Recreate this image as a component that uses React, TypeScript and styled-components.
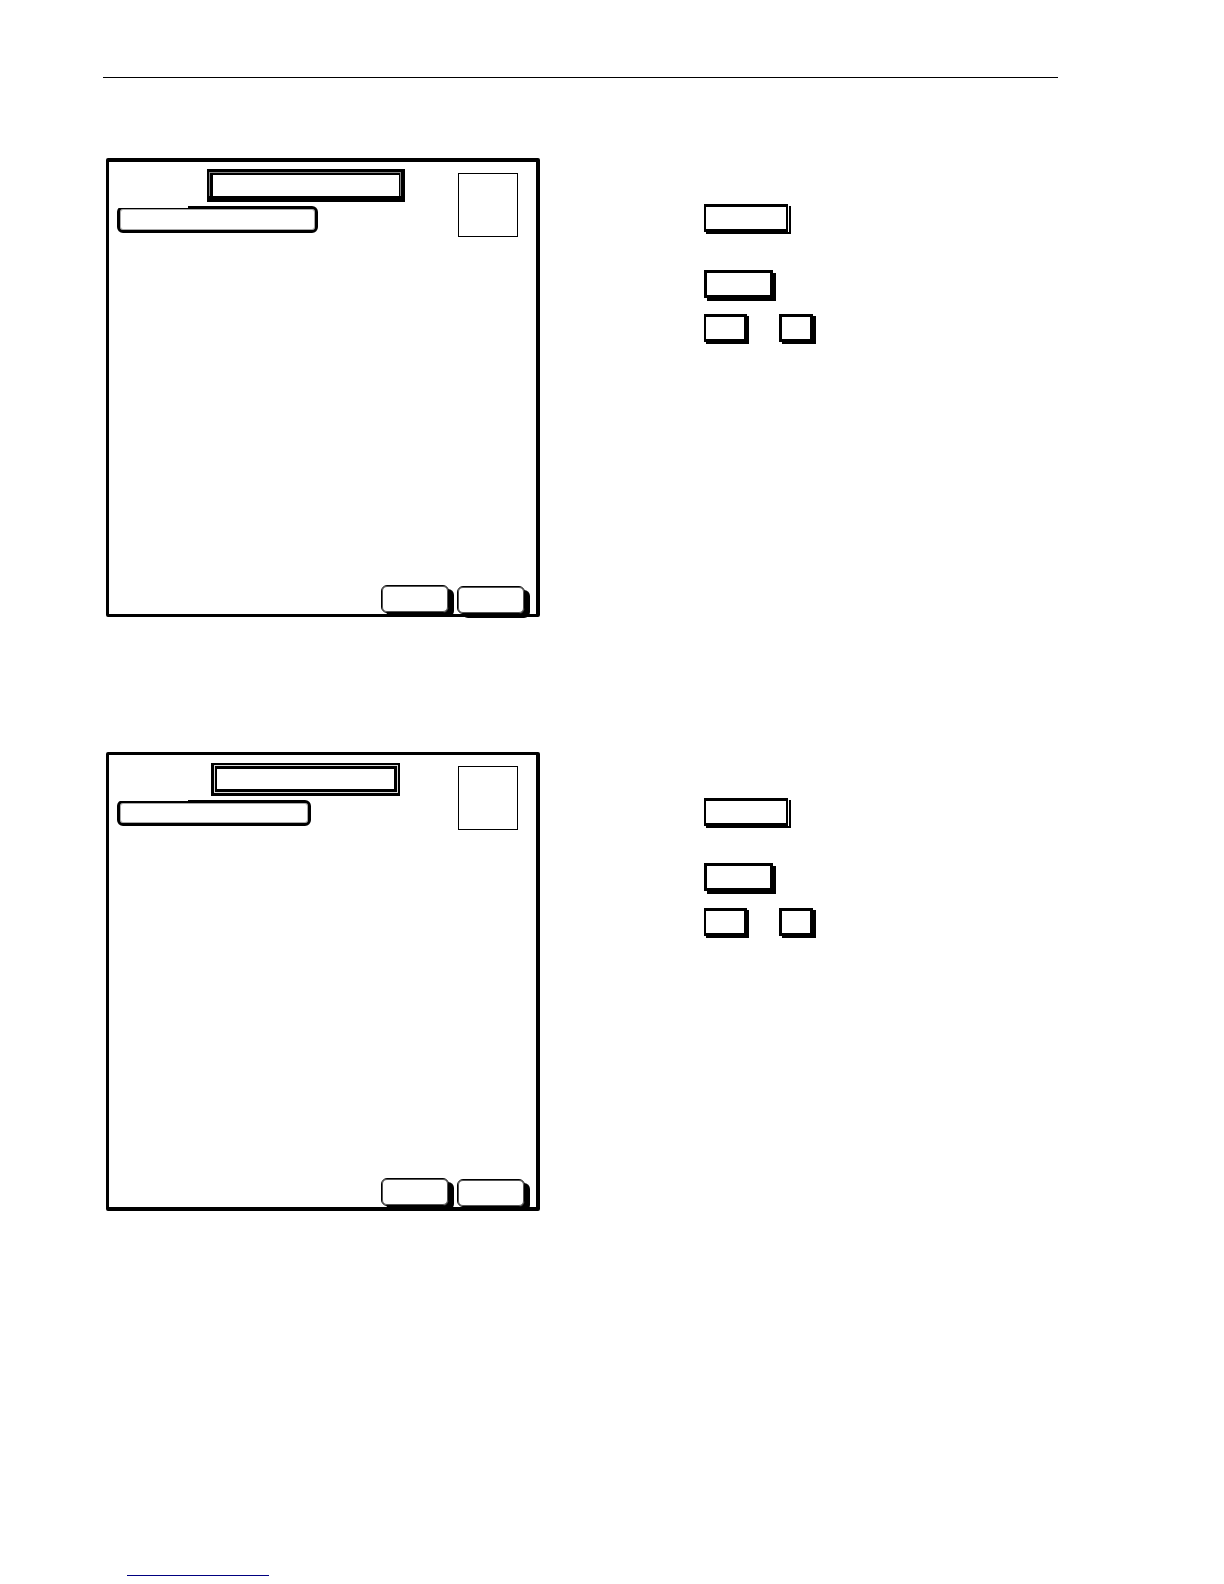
import React from "react";
import styled, { createGlobalStyle } from "styled-components";

const GlobalStyle = createGlobalStyle`
  *, *::before, *::after { box-sizing: border-box; }
  body {
    margin: 0;
    background: #fff;
    color: #000;
    font-family: "Liberation Sans", Arial, sans-serif;
  }
`;

const Page = styled.div`
  display: flex;
  flex-direction: column;
  min-height: 100vh;
  padding: 77px 166px 8px 103px;
`;

const HeaderRule = styled.hr`
  width: 100%;
  height: 1px;
  margin: 0 0 80px;
  border: 0;
  background: #000;
`;

const Sections = styled.main`
  display: flex;
  flex-direction: column;
  gap: 135px;
  padding-left: 3px;
`;

const Section = styled.section`
  display: grid;
  grid-template-columns: minmax(0, 434px) minmax(0, 1fr);
  column-gap: 164px;
`;

const Panel = styled.div<{ $top: number; $bottom: number }>`
  display: flex;
  flex-direction: column;
  justify-content: space-between;
  min-height: 459px;
  padding: ${(p) => 11 - p.$top}px 11px 0 8px;
  border: solid #000;
  border-width: ${(p) => p.$top}px 4px ${(p) => p.$bottom}px 3px;
  border-radius: 2px;
`;

const PanelHead = styled.div`
  display: flex;
  justify-content: space-between;
  padding-right: 7px;
`;

const Headings = styled.div`
  display: flex;
  flex-direction: column;
  align-items: flex-start;
  gap: 4px;
`;

const Title = styled.div<{ $indent: number; $width: number; $border: string; $line: string }>`
  display: flex;
  width: ${(p) => p.$width}px;
  height: 33px;
  margin-left: ${(p) => p.$indent}px;
  border: solid #000;
  border-width: ${(p) => p.$border};
  background: ${(p) => p.$line};
`;

const TitleText = styled.div<{ $border: string; $gap: string }>`
  flex: 1;
  margin: ${(p) => p.$gap};
  border: solid #000;
  border-width: ${(p) => p.$border};
  background: #fff;
`;

const Bar = styled.div<{ $width: number; $height: number; $notch: number }>`
  position: relative;
  width: ${(p) => p.$width}px;
  height: ${(p) => p.$height}px;
  border: 3px solid #000;
  border-radius: 6px;
  box-shadow: inset 0 0 0 1px #aaa;

  &::before {
    content: "";
    position: absolute;
    top: -3px;
    left: -3px;
    width: 71px;
    height: ${(p) => p.$notch}px;
    background: #fff;
  }
`;

const Thumbnail = styled.div<{ $top: number }>`
  flex: none;
  width: 60px;
  height: 64px;
  margin-top: ${(p) => p.$top}px;
  border: 1px solid #000;
`;

const Actions = styled.div`
  display: flex;
  align-items: flex-end;
  justify-content: flex-end;
  gap: 8px;
`;

const ActionButton = styled.button<{ $raised?: boolean }>`
  width: 68px;
  height: 28px;
  margin: 0 0 ${(p) => (p.$raised ? 1 : 0)}px;
  padding: 0;
  border: 1px solid #000;
  border-radius: 6px;
  background: #fff;
  box-shadow: inset 0 0 0 1px #555, 5px 4px 0 #000;
`;

const Keys = styled.div`
  display: flex;
  flex-direction: column;
  align-items: flex-start;
  padding-top: 46px;
`;

const KeyRow = styled.div<{ $after: number }>`
  display: flex;
  gap: 32px;
  margin-bottom: ${(p) => p.$after}px;
`;

const KeyButton = styled.button<{ $width: number; $border?: string; $shadow?: string }>`
  width: ${(p) => p.$width}px;
  height: 28px;
  margin: 0;
  padding: 0;
  border: solid #000;
  border-width: ${(p) => p.$border ?? "3px"};
  border-radius: 0;
  background: #fff;
  box-shadow: ${(p) => p.$shadow ?? "3px 3px 0 #000"};
`;

const Footer = styled.footer`
  display: flex;
  margin-top: auto;
  padding-left: 24px;
`;

const FooterLink = styled.a`
  width: 142px;
  height: 16px;
  border-bottom: 1px solid #000080;
`;

function KeyList({ gap }: { gap: [number, number] }) {
  return (
    <Keys>
      <KeyRow $after={gap[0]}>
        <KeyButton
          type="button"
          $width={84}
          $border="3px 2px 3px 2px"
          $shadow="1px 0 0 #fff, 2px 2px 0 #000, 3px 3px 0 -1px #000, 3px 2px 0 #000"
        />
      </KeyRow>
      <KeyRow $after={gap[1]}>
        <KeyButton type="button" $width={69} />
      </KeyRow>
      <KeyRow $after={0}>
        <KeyButton type="button" $width={43} $border="3px 3px 3px 2px" $shadow="2px 2px 0 #000" />
        <KeyButton type="button" $width={34} $shadow="3px 2px 0 #000" />
      </KeyRow>
    </Keys>
  );
}

function PanelActions() {
  return (
    <Actions>
      <ActionButton type="button" $raised />
      <ActionButton type="button" />
    </Actions>
  );
}

export default function App() {
  return (
    <>
      <GlobalStyle />
      <Page>
        <HeaderRule />
        <Sections>
          <Section>
            <Panel $top={4} $bottom={3}>
              <PanelHead>
                <Headings>
                  <Title $indent={90} $width={198} $border="3px 4px 6px 2px" $line="#888">
                    <TitleText $gap="1px 1px 0 1px" $border="2px 1px 0 3px" />
                  </Title>
                  <Bar $width={201} $height={27} $notch={2} />
                </Headings>
                <Thumbnail $top={4} />
              </PanelHead>
              <PanelActions />
            </Panel>
            <KeyList gap={[38, 16]} />
          </Section>
          <Section>
            <Panel $top={3} $bottom={4}>
              <PanelHead>
                <Headings>
                  <Title $indent={94} $width={189} $border="2px 2px 3px 3px" $line="#ddd">
                    <TitleText $gap="1px" $border="3px 3px 3px 2px" />
                  </Title>
                  <Bar $width={194} $height={26} $notch={1} />
                </Headings>
                <Thumbnail $top={3} />
              </PanelHead>
              <PanelActions />
            </Panel>
            <KeyList gap={[37, 17]} />
          </Section>
        </Sections>
        <Footer>
          <FooterLink href="#" aria-label="Website" />
        </Footer>
      </Page>
    </>
  );
}
